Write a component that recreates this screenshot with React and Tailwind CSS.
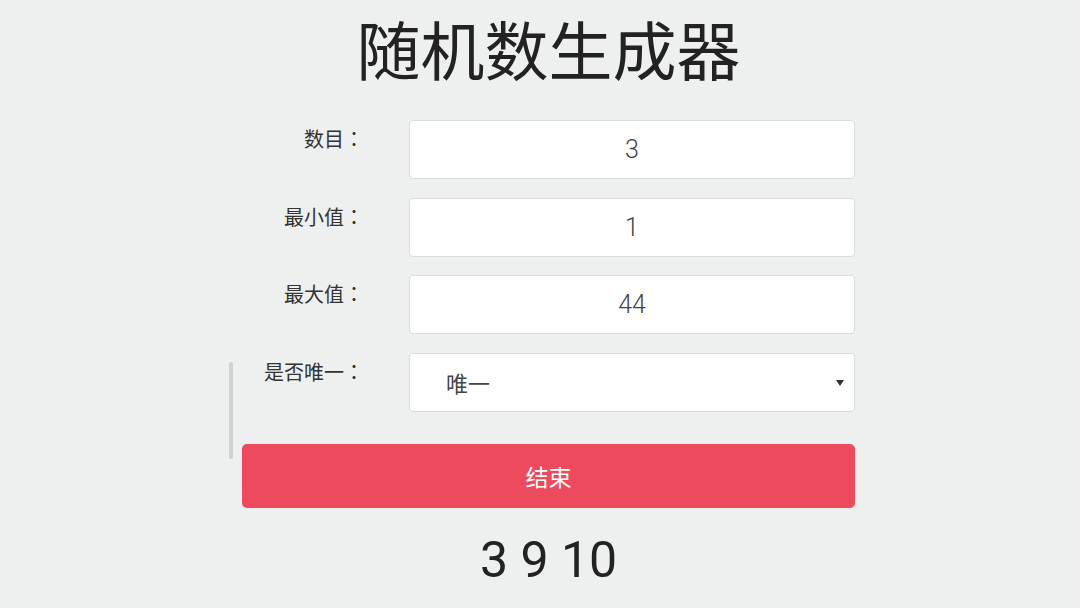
export default function App() {
  const rows = [
    { label: '数目', value: '3', mt: 'mt-0' },
    { label: '最小值', value: '1', mt: 'mt-[19px]' },
    { label: '最大值', value: '44', mt: 'mt-[18px]' },
  ];

  const Colon = () => (
    <span style={{ fontFamily: '"Noto Sans CJK TC", sans-serif' }}>：</span>
  );

  return (
    <div
      className="min-h-[608px] w-full bg-[#edf0ef] flex flex-col items-center pl-[17px] text-[#222]"
      style={{ fontFamily: '"Noto Sans CJK SC", "Noto Sans", sans-serif' }}
    >
      <h1 className="text-[64px] leading-[94px] font-normal">随机数生成器</h1>

      <div className="relative w-[613px] mt-[26px] flex flex-col">
        {/* scroll bar sliver on the left */}
        <div className="absolute left-[-13px] top-[242px] w-[4px] h-[97px] rounded-full bg-[#d0d2d2]" />

        {rows.map((r) => (
          <div key={r.label} className={`flex items-start ${r.mt}`}>
            <label className="w-[122px] text-right text-[20px] leading-[20px] pt-[9px] text-[#333]">
              {r.label}
              <Colon />
            </label>
            <input
              readOnly
              value={r.value}
              className="ml-[45px] w-[446px] h-[59px] bg-white border border-[#d9dcdc] rounded-[4px] text-center text-[25px] font-light text-[#444] outline-none"
              style={{ fontFamily: 'Roboto, "Noto Sans", sans-serif' }}
            />
          </div>
        ))}

        <div className="flex items-start mt-[19px]">
          <label className="w-[122px] text-right text-[20px] leading-[20px] pt-[9px] text-[#333]">
            是否唯一
            <Colon />
          </label>
          <div className="ml-[45px] w-[446px] h-[59px] bg-white border border-[#d9dcdc] rounded-[4px] flex items-center pl-[36px] pr-[10px]">
            <span className="flex-1 text-[22px] text-[#444]">唯一</span>
            <svg width="8" height="8" viewBox="0 0 8 8" className="mt-[1px]">
              <path d="M0 1 L8 1 L4 7 Z" fill="#333" />
            </svg>
          </div>
        </div>

        <button className="mt-[32px] h-[64px] w-full rounded-[5px] bg-[#ee4a5e] text-white text-[23px]">
          结束
        </button>
      </div>

      <div
        className="mt-[22px] text-[50px] leading-[60px] text-[#222]"
        style={{ fontFamily: 'Roboto, "Noto Sans", sans-serif' }}
      >
        3 9 10
      </div>
    </div>
  );
}
